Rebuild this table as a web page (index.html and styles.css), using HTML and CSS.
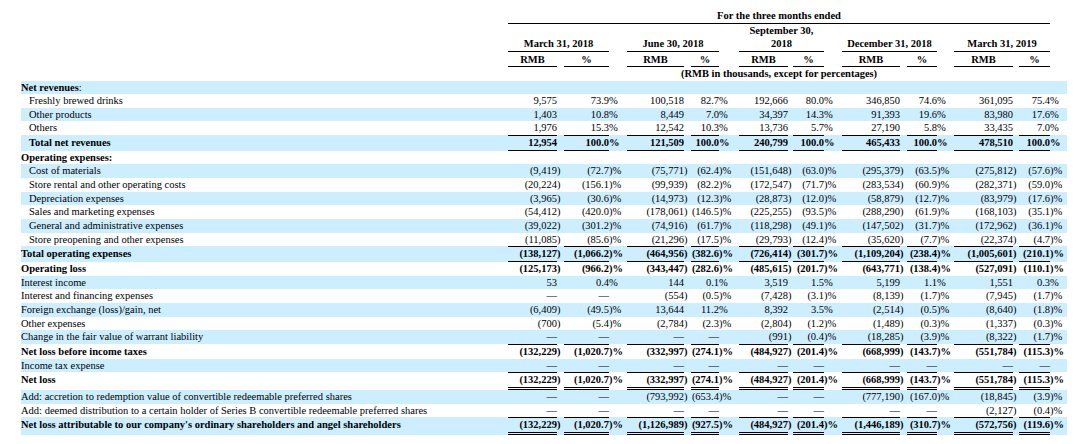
FILE: index.html
```html
<!DOCTYPE html>
<html>
<head>
<meta charset="utf-8">
<link rel="stylesheet" href="styles.css">
</head>
<body>
<table class="fin">
<colgroup>
<col class="c-label">
<col class="w49"><col class="w7"><col class="w45"><col class="w18">
<col class="w57"><col class="w7"><col class="w28"><col class="w20">
<col class="w49"><col class="w5"><col class="w31"><col class="w18">
<col class="w58"><col class="w7"><col class="w30"><col class="w17">
<col class="w59"><col class="w6"><col class="w31"><col class="w17">
</colgroup>
<thead>
<tr class="h1"><th></th><th colspan="19" class="ul">For the three months ended</th><th></th></tr>
<tr class="h2"><th></th>
<th colspan="3" class="ul">March 31, 2018</th><th></th>
<th colspan="3" class="ul">June 30, 2018</th><th></th>
<th colspan="3" class="ul">September 30,<br>2018</th><th></th>
<th colspan="3" class="ul">December 31, 2018</th><th></th>
<th colspan="3" class="ul">March 31, 2019</th><th></th>
</tr>
<tr class="h3"><th></th>
<th class="ul">RMB</th><th></th><th class="ul">%</th><th></th>
<th class="ul">RMB</th><th></th><th class="ul">%</th><th></th>
<th class="ul">RMB</th><th></th><th class="ul">%</th><th></th>
<th class="ul">RMB</th><th></th><th class="ul">%</th><th></th>
<th class="ul">RMB</th><th></th><th class="ul">%</th><th></th>
</tr>
<tr class="h4"><th></th><th colspan="19">(RMB in thousands, except for percentages)</th><th></th></tr>
</thead>
<tbody>
<tr class="bl"><td class="lab"><b>Net revenues</b>:</td><td></td><td></td><td></td><td></td><td></td><td></td><td></td><td></td><td></td><td></td><td></td><td></td><td></td><td></td><td></td><td></td><td></td><td></td><td></td><td></td></tr>
<tr><td class="lab ind">Freshly brewed drinks</td>
<td class="n">9,575</td><td class="p"></td><td class="n">73.9</td><td class="q">%</td>
<td class="n">100,518</td><td class="p"></td><td class="n">82.7</td><td class="q">%</td>
<td class="n">192,666</td><td class="p"></td><td class="n">80.0</td><td class="q">%</td>
<td class="n">346,850</td><td class="p"></td><td class="n">74.6</td><td class="q">%</td>
<td class="n">361,095</td><td class="p"></td><td class="n">75.4</td><td class="q">%</td></tr>
<tr class="bl"><td class="lab ind">Other products</td>
<td class="n">1,403</td><td class="p"></td><td class="n">10.8</td><td class="q">%</td>
<td class="n">8,449</td><td class="p"></td><td class="n">7.0</td><td class="q">%</td>
<td class="n">34,397</td><td class="p"></td><td class="n">14.3</td><td class="q">%</td>
<td class="n">91,393</td><td class="p"></td><td class="n">19.6</td><td class="q">%</td>
<td class="n">83,980</td><td class="p"></td><td class="n">17.6</td><td class="q">%</td></tr>
<tr><td class="lab ind">Others</td>
<td class="n">1,976</td><td class="p"></td><td class="n">15.3</td><td class="q">%</td>
<td class="n">12,542</td><td class="p"></td><td class="n">10.3</td><td class="q">%</td>
<td class="n">13,736</td><td class="p"></td><td class="n">5.7</td><td class="q">%</td>
<td class="n">27,190</td><td class="p"></td><td class="n">5.8</td><td class="q">%</td>
<td class="n">33,435</td><td class="p"></td><td class="n">7.0</td><td class="q">%</td></tr>
<tr class="bl bold tt bb"><td class="lab ind">Total net revenues</td>
<td class="n">12,954</td><td class="p"></td><td class="n">100.0</td><td class="q">%</td>
<td class="n">121,509</td><td class="p"></td><td class="n">100.0</td><td class="q">%</td>
<td class="n">240,799</td><td class="p"></td><td class="n">100.0</td><td class="q">%</td>
<td class="n">465,433</td><td class="p"></td><td class="n">100.0</td><td class="q">%</td>
<td class="n">478,510</td><td class="p"></td><td class="n">100.0</td><td class="q">%</td></tr>
<tr class="bold"><td class="lab">Operating expenses:</td><td></td><td></td><td></td><td></td><td></td><td></td><td></td><td></td><td></td><td></td><td></td><td></td><td></td><td></td><td></td><td></td><td></td><td></td><td></td><td></td></tr>
<tr class="bl"><td class="lab ind">Cost of materials</td>
<td class="n">(9,419</td><td class="p">)</td><td class="n">(72.7</td><td class="q">)%</td>
<td class="n">(75,771</td><td class="p">)</td><td class="n">(62.4</td><td class="q">)%</td>
<td class="n">(151,648</td><td class="p">)</td><td class="n">(63.0</td><td class="q">)%</td>
<td class="n">(295,379</td><td class="p">)</td><td class="n">(63.5</td><td class="q">)%</td>
<td class="n">(275,812</td><td class="p">)</td><td class="n">(57.6</td><td class="q">)%</td></tr>
<tr><td class="lab ind">Store rental and other operating costs</td>
<td class="n">(20,224</td><td class="p">)</td><td class="n">(156.1</td><td class="q">)%</td>
<td class="n">(99,939</td><td class="p">)</td><td class="n">(82.2</td><td class="q">)%</td>
<td class="n">(172,547</td><td class="p">)</td><td class="n">(71.7</td><td class="q">)%</td>
<td class="n">(283,534</td><td class="p">)</td><td class="n">(60.9</td><td class="q">)%</td>
<td class="n">(282,371</td><td class="p">)</td><td class="n">(59.0</td><td class="q">)%</td></tr>
<tr class="bl"><td class="lab ind">Depreciation expenses</td>
<td class="n">(3,965</td><td class="p">)</td><td class="n">(30.6</td><td class="q">)%</td>
<td class="n">(14,973</td><td class="p">)</td><td class="n">(12.3</td><td class="q">)%</td>
<td class="n">(28,873</td><td class="p">)</td><td class="n">(12.0</td><td class="q">)%</td>
<td class="n">(58,879</td><td class="p">)</td><td class="n">(12.7</td><td class="q">)%</td>
<td class="n">(83,979</td><td class="p">)</td><td class="n">(17.6</td><td class="q">)%</td></tr>
<tr><td class="lab ind">Sales and marketing expenses</td>
<td class="n">(54,412</td><td class="p">)</td><td class="n">(420.0</td><td class="q">)%</td>
<td class="n">(178,061</td><td class="p">)</td><td class="n">(146.5</td><td class="q">)%</td>
<td class="n">(225,255</td><td class="p">)</td><td class="n">(93.5</td><td class="q">)%</td>
<td class="n">(288,290</td><td class="p">)</td><td class="n">(61.9</td><td class="q">)%</td>
<td class="n">(168,103</td><td class="p">)</td><td class="n">(35.1</td><td class="q">)%</td></tr>
<tr class="bl"><td class="lab ind">General and administrative expenses</td>
<td class="n">(39,022</td><td class="p">)</td><td class="n">(301.2</td><td class="q">)%</td>
<td class="n">(74,916</td><td class="p">)</td><td class="n">(61.7</td><td class="q">)%</td>
<td class="n">(118,298</td><td class="p">)</td><td class="n">(49.1</td><td class="q">)%</td>
<td class="n">(147,502</td><td class="p">)</td><td class="n">(31.7</td><td class="q">)%</td>
<td class="n">(172,962</td><td class="p">)</td><td class="n">(36.1</td><td class="q">)%</td></tr>
<tr><td class="lab ind">Store preopening and other expenses</td>
<td class="n">(11,085</td><td class="p">)</td><td class="n">(85.6</td><td class="q">)%</td>
<td class="n">(21,296</td><td class="p">)</td><td class="n">(17.5</td><td class="q">)%</td>
<td class="n">(29,793</td><td class="p">)</td><td class="n">(12.4</td><td class="q">)%</td>
<td class="n">(35,620</td><td class="p">)</td><td class="n">(7.7</td><td class="q">)%</td>
<td class="n">(22,374</td><td class="p">)</td><td class="n">(4.7</td><td class="q">)%</td></tr>
<tr class="bl bold tt bb"><td class="lab">Total operating expenses</td>
<td class="n">(138,127</td><td class="p">)</td><td class="n">(1,066.2</td><td class="q">)%</td>
<td class="n">(464,956</td><td class="p">)</td><td class="n">(382.6</td><td class="q">)%</td>
<td class="n">(726,414</td><td class="p">)</td><td class="n">(301.7</td><td class="q">)%</td>
<td class="n">(1,109,204</td><td class="p">)</td><td class="n">(238.4</td><td class="q">)%</td>
<td class="n">(1,005,601</td><td class="p">)</td><td class="n">(210.1</td><td class="q">)%</td></tr>
<tr class="bold"><td class="lab">Operating loss</td>
<td class="n">(125,173</td><td class="p">)</td><td class="n">(966.2</td><td class="q">)%</td>
<td class="n">(343,447</td><td class="p">)</td><td class="n">(282.6</td><td class="q">)%</td>
<td class="n">(485,615</td><td class="p">)</td><td class="n">(201.7</td><td class="q">)%</td>
<td class="n">(643,771</td><td class="p">)</td><td class="n">(138.4</td><td class="q">)%</td>
<td class="n">(527,091</td><td class="p">)</td><td class="n">(110.1</td><td class="q">)%</td></tr>
<tr class="bl"><td class="lab">Interest income</td>
<td class="n">53</td><td class="p"></td><td class="n">0.4</td><td class="q">%</td>
<td class="n">144</td><td class="p"></td><td class="n">0.1</td><td class="q">%</td>
<td class="n">3,519</td><td class="p"></td><td class="n">1.5</td><td class="q">%</td>
<td class="n">5,199</td><td class="p"></td><td class="n">1.1</td><td class="q">%</td>
<td class="n">1,551</td><td class="p"></td><td class="n">0.3</td><td class="q">%</td></tr>
<tr><td class="lab">Interest and financing expenses</td>
<td class="n">—</td><td class="p"></td><td class="n">—</td><td class="q"></td>
<td class="n">(554</td><td class="p">)</td><td class="n">(0.5</td><td class="q">)%</td>
<td class="n">(7,428</td><td class="p">)</td><td class="n">(3.1</td><td class="q">)%</td>
<td class="n">(8,139</td><td class="p">)</td><td class="n">(1.7</td><td class="q">)%</td>
<td class="n">(7,945</td><td class="p">)</td><td class="n">(1.7</td><td class="q">)%</td></tr>
<tr class="bl"><td class="lab">Foreign exchange (loss)/gain, net</td>
<td class="n">(6,409</td><td class="p">)</td><td class="n">(49.5</td><td class="q">)%</td>
<td class="n">13,644</td><td class="p"></td><td class="n">11.2</td><td class="q">%</td>
<td class="n">8,392</td><td class="p"></td><td class="n">3.5</td><td class="q">%</td>
<td class="n">(2,514</td><td class="p">)</td><td class="n">(0.5</td><td class="q">)%</td>
<td class="n">(8,640</td><td class="p">)</td><td class="n">(1.8</td><td class="q">)%</td></tr>
<tr><td class="lab">Other expenses</td>
<td class="n">(700</td><td class="p">)</td><td class="n">(5.4</td><td class="q">)%</td>
<td class="n">(2,784</td><td class="p">)</td><td class="n">(2.3</td><td class="q">)%</td>
<td class="n">(2,804</td><td class="p">)</td><td class="n">(1.2</td><td class="q">)%</td>
<td class="n">(1,489</td><td class="p">)</td><td class="n">(0.3</td><td class="q">)%</td>
<td class="n">(1,337</td><td class="p">)</td><td class="n">(0.3</td><td class="q">)%</td></tr>
<tr class="bl"><td class="lab">Change in the fair value of warrant liability</td>
<td class="n">—</td><td class="p"></td><td class="n">—</td><td class="q"></td>
<td class="n">—</td><td class="p"></td><td class="n">—</td><td class="q"></td>
<td class="n">(991</td><td class="p">)</td><td class="n">(0.4</td><td class="q">)%</td>
<td class="n">(18,285</td><td class="p">)</td><td class="n">(3.9</td><td class="q">)%</td>
<td class="n">(8,322</td><td class="p">)</td><td class="n">(1.7</td><td class="q">)%</td></tr>
<tr class="bold tt"><td class="lab">Net loss before income taxes</td>
<td class="n">(132,229</td><td class="p">)</td><td class="n">(1,020.7</td><td class="q">)%</td>
<td class="n">(332,997</td><td class="p">)</td><td class="n">(274.1</td><td class="q">)%</td>
<td class="n">(484,927</td><td class="p">)</td><td class="n">(201.4</td><td class="q">)%</td>
<td class="n">(668,999</td><td class="p">)</td><td class="n">(143.7</td><td class="q">)%</td>
<td class="n">(551,784</td><td class="p">)</td><td class="n">(115.3</td><td class="q">)%</td></tr>
<tr class="bl"><td class="lab">Income tax expense</td>
<td class="n">—</td><td class="p"></td><td class="n">—</td><td class="q"></td>
<td class="n">—</td><td class="p"></td><td class="n">—</td><td class="q"></td>
<td class="n">—</td><td class="p"></td><td class="n">—</td><td class="q"></td>
<td class="n">—</td><td class="p"></td><td class="n">—</td><td class="q"></td>
<td class="n">—</td><td class="p"></td><td class="n">—</td><td class="q"></td></tr>
<tr class="bold tt dbl"><td class="lab">Net loss</td>
<td class="n">(132,229</td><td class="p">)</td><td class="n">(1,020.7</td><td class="q">)%</td>
<td class="n">(332,997</td><td class="p">)</td><td class="n">(274.1</td><td class="q">)%</td>
<td class="n">(484,927</td><td class="p">)</td><td class="n">(201.4</td><td class="q">)%</td>
<td class="n">(668,999</td><td class="p">)</td><td class="n">(143.7</td><td class="q">)%</td>
<td class="n">(551,784</td><td class="p">)</td><td class="n">(115.3</td><td class="q">)%</td></tr>
<tr class="bl"><td class="lab">Add: accretion to redemption value of convertible redeemable preferred shares</td>
<td class="n">—</td><td class="p"></td><td class="n">—</td><td class="q"></td>
<td class="n">(793,992</td><td class="p">)</td><td class="n">(653.4</td><td class="q">)%</td>
<td class="n">—</td><td class="p"></td><td class="n">—</td><td class="q"></td>
<td class="n">(777,190</td><td class="p">)</td><td class="n">(167.0</td><td class="q">)%</td>
<td class="n">(18,845</td><td class="p">)</td><td class="n">(3.9</td><td class="q">)%</td></tr>
<tr><td class="lab">Add: deemed distribution to a certain holder of Series B convertible redeemable preferred shares</td>
<td class="n">—</td><td class="p"></td><td class="n">—</td><td class="q"></td>
<td class="n">—</td><td class="p"></td><td class="n">—</td><td class="q"></td>
<td class="n">—</td><td class="p"></td><td class="n">—</td><td class="q"></td>
<td class="n">—</td><td class="p"></td><td class="n">—</td><td class="q"></td>
<td class="n">(2,127</td><td class="p">)</td><td class="n">(0.4</td><td class="q">)%</td></tr>
<tr class="bl bold tt dbl"><td class="lab">Net loss attributable to our company's ordinary shareholders and angel shareholders</td>
<td class="n">(132,229</td><td class="p">)</td><td class="n">(1,020.7</td><td class="q">)%</td>
<td class="n">(1,126,989</td><td class="p">)</td><td class="n">(927.5</td><td class="q">)%</td>
<td class="n">(484,927</td><td class="p">)</td><td class="n">(201.4</td><td class="q">)%</td>
<td class="n">(1,446,189</td><td class="p">)</td><td class="n">(310.7</td><td class="q">)%</td>
<td class="n">(572,756</td><td class="p">)</td><td class="n">(119.6</td><td class="q">)%</td></tr>
</tbody>
</table>
</body>
</html>
```
FILE: styles.css
```css
html, body {
  margin: 0;
  padding: 0;
  background: #ffffff;
}
body {
  font-family: "Liberation Serif", "Times New Roman", serif;
  font-size: 10.5px;
  color: #000;
}
.fin {
  margin: 9px 0 0 21px;
  width: 1046px;
  table-layout: fixed;
  border-collapse: separate;
  border-spacing: 0;
}
.c-label { width: 487px; }
.w5 { width: 5px; }
.w6 { width: 6px; }
.w7 { width: 7px; }
.w17 { width: 17px; }
.w18 { width: 18px; }
.w20 { width: 20px; }
.w28 { width: 28px; }
.w30 { width: 30px; }
.w31 { width: 31px; }
.w45 { width: 45px; }
.w49 { width: 49px; }
.w57 { width: 57px; }
.w58 { width: 58px; }
.w59 { width: 59px; }

.fin th {
  padding: 0;
  font-weight: bold;
  text-align: center;
  vertical-align: bottom;
  line-height: 13.5px;
  white-space: nowrap;
}
.fin th.ul { border-bottom: 1px solid #000; }
.fin tr.h1 th { line-height: 13.5px; }
.fin tr.h3 th { padding-top: 1px; }

.fin td {
  padding: 0;
  line-height: 13.65px;
  white-space: nowrap;
  vertical-align: baseline;
}
.fin tr.bl td { background: #cceeff; }
.fin tr.bold td { font-weight: bold; }
.fin td.lab { text-align: left; }
.fin td.ind { padding-left: 8px; }
.fin td.lab b { font-weight: bold; }
.fin td.n { text-align: right; }
.fin td.p, .fin td.q { text-align: left; }
.fin tr.tt td.n { border-top: 1px solid #000; }
.fin tr.bb td.n { border-bottom: 1px solid #000; }
.fin tr.dbl td.n { border-bottom: 3px double #000; }
```
